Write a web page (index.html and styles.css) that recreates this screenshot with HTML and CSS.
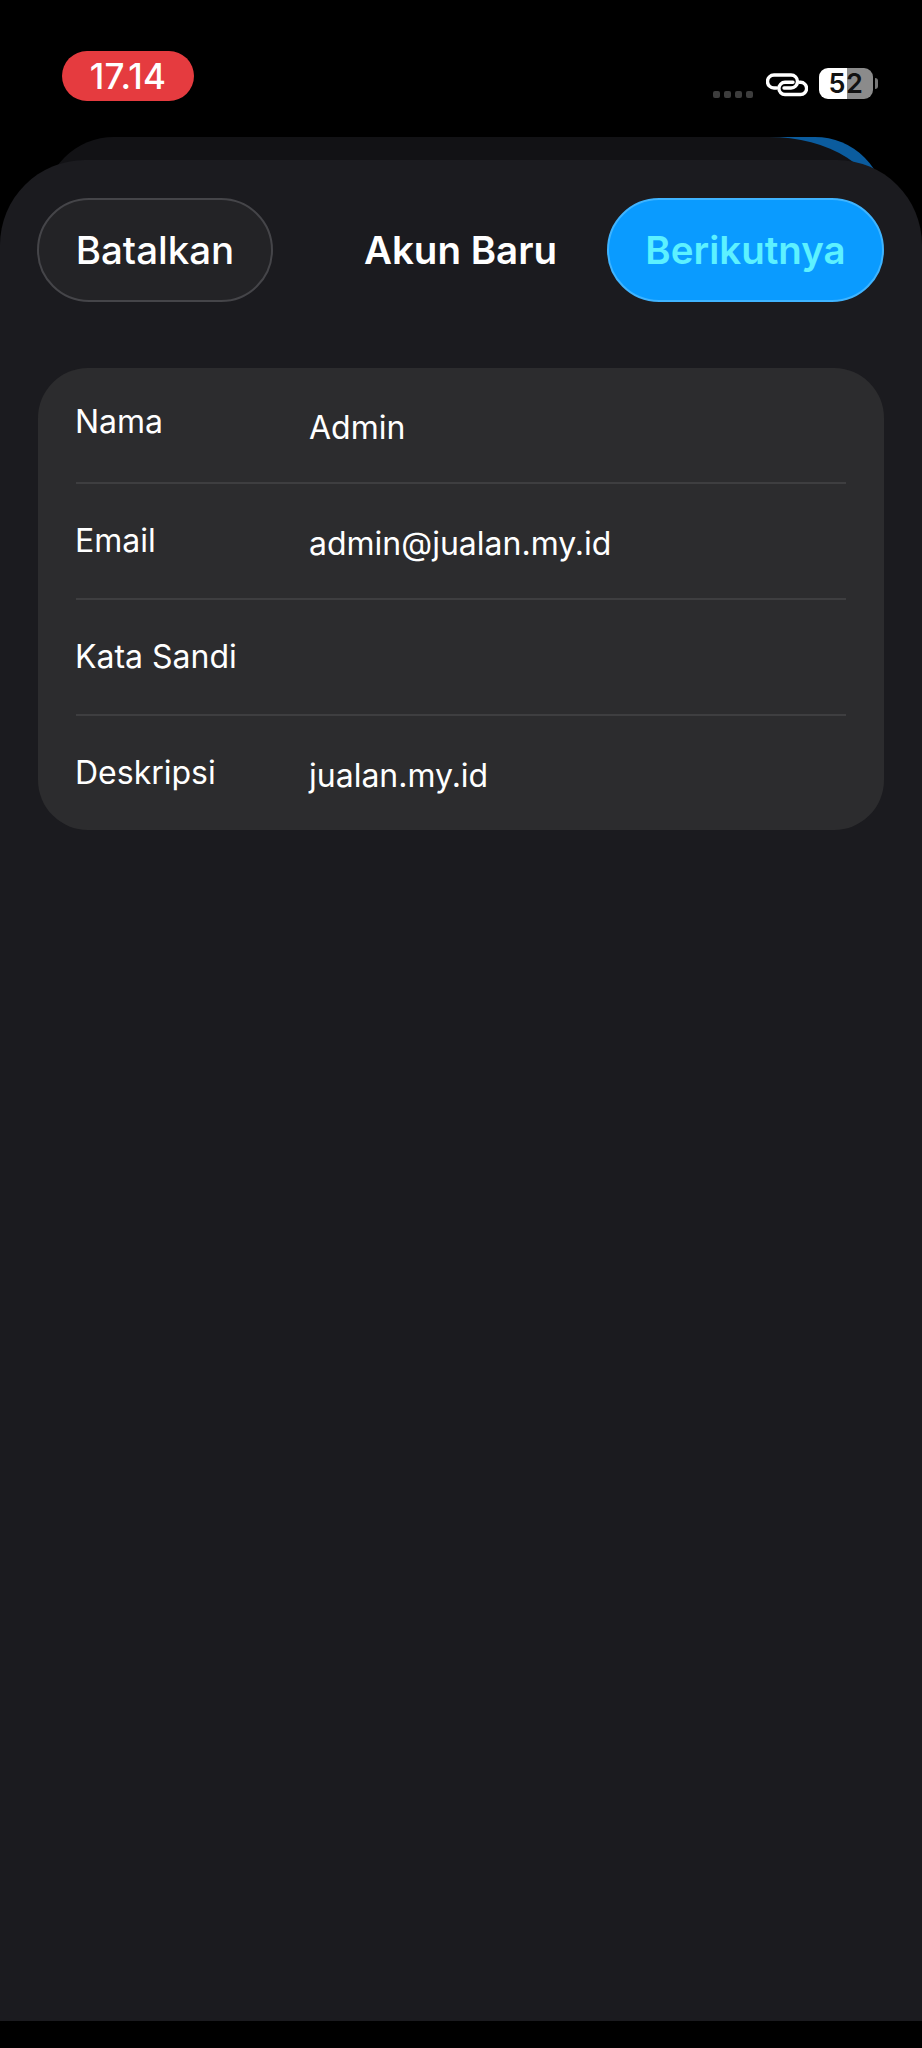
FILE: index.html
```html
<!DOCTYPE html>
<html lang="id">
<head>
<meta charset="utf-8">
<title>Akun Baru</title>
<link rel="stylesheet" href="styles.css">
</head>
<body>
<div class="page">
  <header class="status">
    <div class="clock">17.14</div>
    <div class="status-right">
      <div class="dots"><i></i><i></i><i></i><i></i></div>
      <svg class="link" viewBox="0 0 42 24" fill="none" stroke="#fff" stroke-width="3.4" stroke-linecap="round">
        <path d="M10.5 15H8A6.5 6.5 0 0 1 8 2H25A6.5 6.5 0 0 1 25 15H18"/>
        <path d="M27 9.3H19A6.1 6.1 0 0 0 19 21.5H34.5A6.1 6.1 0 0 0 34.5 9.3H33.5"/>
      </svg>
      <div class="battery"><span class="battery-num">52</span></div>
      <div class="nub"></div>
    </div>
  </header>
  <div class="back-sheet"></div>
  <main class="sheet">
    <div class="nav">
      <button class="btn btn-cancel">Batalkan</button>
      <h1 class="title">Akun Baru</h1>
      <button class="btn btn-next">Berikutnya</button>
    </div>
    <section class="card">
      <div class="row"><span class="label">Nama</span><span class="value">Admin</span></div>
      <div class="row"><span class="label">Email</span><span class="value">admin@jualan.my.id</span></div>
      <div class="row"><span class="label">Kata Sandi</span><span class="value"></span></div>
      <div class="row"><span class="label">Deskripsi</span><span class="value">jualan.my.id</span></div>
    </section>
  </main>
</div>
</body>
</html>
```
FILE: styles.css
```css
* { box-sizing: border-box; }
html, body { margin: 0; background: #000; }
body { font-family: Inter, "Liberation Sans", sans-serif; color: #fff; }
.page { width: 922px; height: 2048px; overflow: hidden; display: flex; flex-direction: column; padding-bottom: 27px; }

.status { height: 137px; flex: none; display: flex; justify-content: space-between; align-items: flex-start; padding: 51px 44px 0 62px; }
.clock { width: 132px; height: 50px; border-radius: 25px; background: #e53b3f; font-size: 35px; font-weight: 500; letter-spacing: 0.3px; line-height: 50px; text-align: center; }
.status-right { display: flex; align-items: flex-start; margin-top: 17px; }
.dots { display: flex; gap: 4px; margin-top: 23px; margin-right: 13px; }
.dots i { display: block; width: 7px; height: 7px; border-radius: 2px; background: #3d3d3d; }
.link { width: 42px; height: 24px; margin-top: 5px; margin-right: 11px; }
.battery { width: 54px; height: 31px; border-radius: 9px; background: linear-gradient(90deg, #fff 52%, #8b8b8b 52%); color: #111; text-align: center; }
.battery-num { font-size: 27px; font-weight: 600; line-height: 31px; display: block; letter-spacing: 0.5px; }
.nub { width: 3px; height: 11px; margin: 10px 0 0 2px; border-radius: 0 3px 3px 0; background: #777; }

.back-sheet { flex: none; position: relative; height: 90px; margin: 0 37px -67px 44px; }
.back-sheet::before { content: ""; position: absolute; top: 0; right: 0; width: 160px; height: 90px; border-top-right-radius: 70px; background: #0b5c9e; }
.back-sheet::after { content: ""; position: absolute; top: 0; left: 0; right: 6px; height: 90px; border-radius: 70px 110px 0 0 / 70px 70px 0 0; background: #121215; }

.sheet { flex: 1; position: relative; background: #1b1b1f; border-radius: 85px 85px 0 0; padding: 38px 38px 0 37px; }
.nav { display: grid; grid-template-columns: 1fr auto 1fr; align-items: center; }
.btn { height: 104px; border-radius: 52px; font-family: inherit; font-size: 38.5px; font-weight: 500; padding: 0; }
.btn-cancel { justify-self: start; width: 236px; background: #232326; border: 2px solid #454549; color: #fff; }
.btn-next { justify-self: end; width: 277px; background: #0a9bff; border: 2px solid #3fb4ff; color: #5df1ff; font-weight: 600; }
.title { margin: 0; font-size: 38.5px; font-weight: 600; text-align: center; }

.card { margin-top: 66px; margin-left: 1px; height: 462px; border-radius: 50px; background: #2c2c2e; padding: 0 38px; display: flex; flex-direction: column; }
.row { flex: 1; display: grid; grid-template-columns: 234px 1fr; align-items: center; font-size: 32px; }
.row + .row { border-top: 2px solid #3e3e40; }
.label { margin-left: -1px; margin-bottom: 2px; }
.row:first-child .label { margin-bottom: 8px; }
.value { margin-left: -1px; margin-top: 4px; }
```
